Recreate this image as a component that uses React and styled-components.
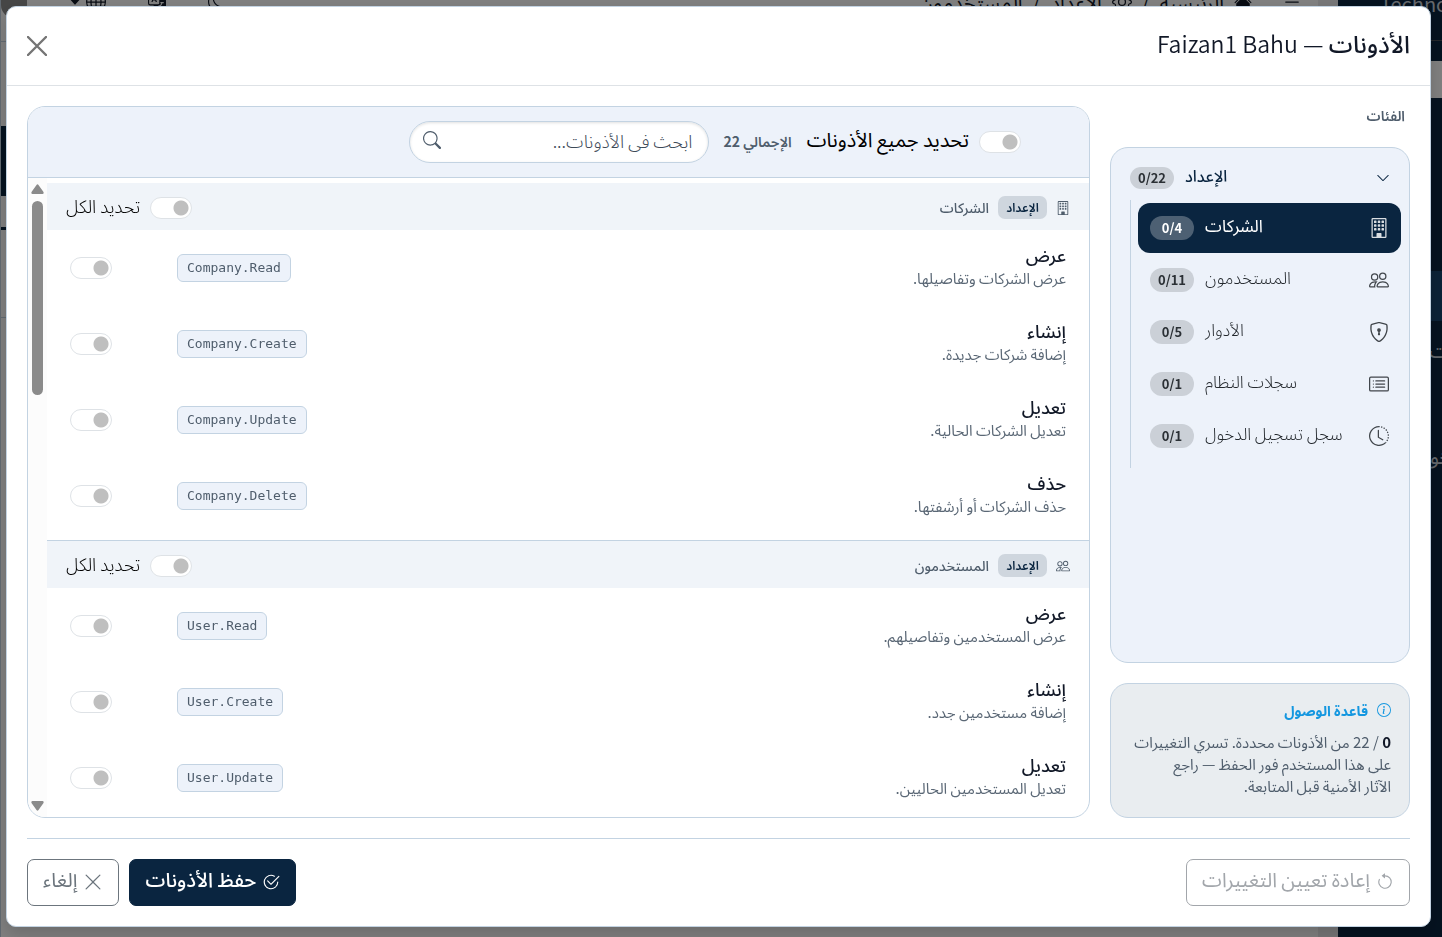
import React, { useState } from 'react';
import styled, { createGlobalStyle } from 'styled-components';
import {
  BsArrowCounterclockwise,
  BsBuilding,
  BsCardList,
  BsCaretDownFill,
  BsCheck2Circle,
  BsChevronDown,
  BsClockHistory,
  BsGear,
  BsGlobe,
  BsHouseFill,
  BsInfoCircle,
  BsList,
  BsMoon,
  BsPeople,
  BsSearch,
  BsShieldLock,
  BsTranslate,
  BsXLg,
} from 'react-icons/bs';

const GlobalStyle = createGlobalStyle`
  * {
    box-sizing: border-box;
  }
  body {
    margin: 0;
    background: #ffffff;
    font-family: "Noto Sans CJK SC", "Noto Sans Arabic", sans-serif;
    color: #111827;
  }
  button, input {
    font-family: inherit;
  }
  svg {
    display: block;
    flex-shrink: 0;
  }
`;

/* page under the dialog */

const StyledPage = styled.div`
  display: flex;
  height: 100vh;
  overflow: hidden;
`;

const StyledContent = styled.div`
  flex: 1;
  display: flex;
  flex-direction: column;
  border-left: 1px solid #c3d3e2;
`;

const StyledTopbar = styled.div`
  display: flex;
  justify-content: space-between;
  height: 42px;
  padding: 0 16px 0 0;
  border-bottom: 1px solid #c3d3e2;
  font-size: 20px;
  line-height: 6px;
`;

const StyledTopGroup = styled.div`
  display: flex;
  align-items: center;
  height: 4px;
  gap: ${(props) => props.$gap};
`;

const StyledAvatar = styled.span`
  width: 26px;
  height: 32px;
  border-radius: 0 0 13px 13px;
  background: #8d8d8d;
`;

const StyledBand = styled.div`
  height: ${(props) => props.$height};
  margin-top: ${(props) => props.$top};
  background: ${(props) => props.$color};
`;

const StyledGutter = styled.div`
  width: 20px;
  background: #ececee;
`;

const StyledNav = styled.nav`
  width: 104px;
  overflow: hidden;
  background: #0a2540;
  color: #c8d0d8;
  direction: ltr;
  white-space: nowrap;
`;

const StyledBrand = styled.div`
  height: 41px;
  padding-left: 42px;
  border-bottom: 1px solid #4a5058;
  font-size: 20px;
  line-height: 8px;
`;

const StyledNavBox = styled.div`
  height: 37px;
  margin-top: 20px;
  background: #ffffff;
`;

const StyledNavItem = styled.div`
  height: ${(props) => props.$height};
  margin-top: ${(props) => props.$top};
  padding-left: ${(props) => props.$left};
  background: ${(props) => (props.$active ? '#16456f' : 'transparent')};
  font-size: 20px;
  line-height: 50px;
`;

/* dialog */

const StyledBackdrop = styled.div`
  position: fixed;
  inset: 0;
  display: flex;
  padding: 6px 11px 10px 6px;
  background: rgba(0, 0, 0, 0.5);
`;

const StyledDialog = styled.section`
  flex: 1;
  min-width: 0;
  display: flex;
  flex-direction: column;
  background: #ffffff;
  border: 1px solid #c3d3e2;
  border-radius: 10px;
  box-shadow: 0 8px 16px rgba(0, 0, 0, 0.15);
`;

const StyledHeader = styled.header`
  display: flex;
  align-items: center;
  justify-content: space-between;
  height: 79px;
  padding: 0 20px;
  border-bottom: 1px solid #dee2e6;
`;

const StyledTitle = styled.h1`
  margin: 0;
  padding-bottom: 6px;
  font-size: 24px;
  font-weight: 500;
  line-height: 32px;
`;

const StyledName = styled.span`
  font-size: 23px;
  font-weight: 350;
`;

const StyledClose = styled.button`
  padding: 0;
  border: 0;
  background: none;
  color: #757575;
  cursor: pointer;
`;

const StyledBody = styled.div`
  flex: 1;
  min-height: 0;
  display: flex;
  gap: 20px;
  padding: 20px;
`;

const StyledSide = styled.aside`
  width: 300px;
  flex-shrink: 0;
  display: flex;
  flex-direction: column;
`;

const StyledSideTitle = styled.h2`
  margin: 0 5px;
  padding-bottom: 23px;
  font-size: 14px;
  font-weight: 600;
  line-height: 18px;
  color: #4f5d6c;
`;

const StyledTree = styled.div`
  flex: 1;
  padding: 16px 8px 0 19px;
  background: #edf2fa;
  border: 1px solid #c3d3e2;
  border-radius: 18px;
`;

const StyledTreeHead = styled.button`
  display: flex;
  align-items: center;
  justify-content: space-between;
  width: 100%;
  height: 28px;
  padding: 0 11px 0 0;
  border: 0;
  background: none;
  font-size: 16px;
  font-weight: 500;
  line-height: 24px;
  color: #0a2540;
  cursor: pointer;
`;

const StyledTail = styled.span`
  display: flex;
  align-items: center;
  gap: 11px;
`;

const StyledCount = styled.span`
  width: 44px;
  border-radius: 12px;
  background: ${(props) => (props.$active ? '#4d6073' : '#cbd0d7')};
  color: ${(props) => (props.$active ? '#ffffff' : '#2b3035')};
  font-size: 13px;
  font-weight: ${(props) => (props.$active ? 700 : 600)};
  line-height: ${(props) => (props.$small ? '22px' : '24px')};
  text-align: center;
  direction: ltr;
`;

const StyledBranch = styled.div`
  display: flex;
  flex-direction: column;
  gap: 2px;
  margin-top: 8px;
  padding: 3px 0 7px 7px;
  border-left: 1px solid #c3d3e2;
`;

const StyledBranchItem = styled.button`
  display: flex;
  align-items: center;
  justify-content: space-between;
  height: 50px;
  padding: 0 12px;
  border: 0;
  border-radius: 12px;
  background: ${(props) => (props.$active ? '#0a2540' : 'transparent')};
  color: ${(props) => (props.$active ? '#ffffff' : '#24292e')};
  font-size: 17px;
  font-weight: ${(props) => (props.$active ? 400 : 300)};
  line-height: 24px;
  cursor: pointer;
  svg {
    opacity: 0.85;
  }
`;

const StyledLabel = styled.span`
  padding-bottom: 6px;
`;

const StyledNote = styled.div`
  margin-top: 20px;
  padding: 15px 18px 20px;
  background: #e9edf0;
  border: 1px solid #c3d3e2;
  border-radius: 18px;
`;

const StyledNoteTitle = styled.div`
  display: flex;
  align-items: center;
  gap: 9px;
  font-size: 14px;
  font-weight: 700;
  line-height: 22px;
  color: #1497e0;
`;

const StyledNoteText = styled.p`
  margin: 10px 0 0;
  font-size: 15px;
  font-weight: 400;
  line-height: 22px;
  color: #4f5d6c;
  b {
    font-weight: 700;
    color: #111827;
  }
`;

const StyledPanel = styled.div`
  flex: 1;
  min-width: 0;
  display: flex;
  flex-direction: column;
  overflow: hidden;
  border: 1px solid #c3d3e2;
  border-radius: 18px;
`;

const StyledToolbar = styled.div`
  display: flex;
  align-items: center;
  gap: 15px;
  height: 71px;
  padding: 0 68px 0 16px;
  background: #edf2fa;
  border-bottom: 1px solid #c3d3e2;
`;

const StyledSwitchLabel = styled.label`
  display: flex;
  align-items: center;
  gap: 10px;
  font-size: ${(props) => (props.$large ? '20px' : '18px')};
  font-weight: ${(props) => (props.$large ? 400 : 300)};
  line-height: 28px;
  color: #000000;
`;

const StyledSwitch = styled.input`
  appearance: none;
  flex-shrink: 0;
  width: 42px;
  height: 22px;
  margin: 0;
  border: 1px solid #dee2e6;
  border-radius: 11px;
  background: #ffffff radial-gradient(circle at center, #bfbfbf 7px, transparent 8px) right 2px center / 16px 16px
    no-repeat;
  cursor: pointer;
  &:checked {
    background-position: left 2px center;
    border-color: #0a2540;
  }
`;

const StyledTotal = styled.span`
  padding-bottom: 2px;
  font-size: 14px;
  font-weight: 600;
  line-height: 20px;
  color: #4f5d6c;
`;

const StyledSearch = styled.label`
  display: flex;
  align-items: center;
  justify-content: space-between;
  width: 300px;
  height: 42px;
  padding: 0 15px 4px 13px;
  border: 1px solid #c3d3e2;
  border-radius: 21px;
  background: #ffffff;
  box-shadow: inset 0 1px 3px rgba(0, 0, 0, 0.12);
  color: #4f5d6c;
`;

const StyledSearchInput = styled.input`
  width: 200px;
  padding: 0;
  border: 0;
  outline: 0;
  background: none;
  font-size: 18px;
  font-weight: 300;
  line-height: 26px;
  direction: rtl;
  &::placeholder {
    color: #3d4a58;
    opacity: 1;
  }
`;

const StyledScroll = styled.div`
  flex: 1;
  min-height: 0;
  display: flex;
`;

const StyledList = styled.div`
  flex: 1;
  padding-top: 5px;
  overflow-y: auto;
  scrollbar-width: none;
`;

const StyledTrack = styled.div`
  display: flex;
  flex-direction: column;
  align-items: center;
  width: 19px;
  padding: 6px 0;
  background: #fcfcfc;
  color: #8b8b8b;
`;

const StyledThumb = styled.div`
  width: 11px;
  height: 31%;
  margin: 7px 0 auto;
  border-radius: 6px;
  background: #8b8b8b;
`;

const StyledGroup = styled.section`
  padding-bottom: 6px;
  & + & {
    border-top: 1px solid #c3d3e2;
  }
`;

const StyledGroupHead = styled.div`
  display: flex;
  align-items: center;
  gap: 9px;
  height: 47px;
  padding: 2px 19px 0;
  background: #f0f4f9;
  color: #4f5d6c;
`;

const StyledGroupBadge = styled.span`
  width: 49px;
  padding-bottom: 2px;
  border-radius: 7px;
  background: #cfd6de;
  color: #0a2540;
  font-size: 12px;
  font-weight: 600;
  line-height: 21px;
  text-align: center;
`;

const StyledGroupName = styled.h3`
  flex: 1;
  margin: 0;
  padding-bottom: 2px;
  font-size: 14px;
  font-weight: 500;
  line-height: 20px;
`;

const StyledRow = styled.div`
  display: flex;
  align-items: center;
  height: 76px;
  padding: 0 23px;
`;

const StyledRowText = styled.div`
  flex: 1;
  padding-bottom: 7px;
`;

const StyledRowTitle = styled.div`
  font-size: 18px;
  font-weight: 500;
  line-height: 26px;
`;

const StyledRowHint = styled.div`
  font-size: 15px;
  font-weight: 400;
  line-height: 22px;
  color: #5b6876;
`;

const StyledCode = styled.code`
  margin-left: 65px;
  padding: 0 9px;
  border: 1px solid #c3d3e2;
  border-radius: 6px;
  background: #edf2fa;
  font-family: 'DejaVu Sans Mono', monospace;
  font-size: 13px;
  line-height: 26px;
  color: #4f5d6c;
  direction: ltr;
`;

const StyledFooter = styled.footer`
  display: flex;
  align-items: center;
  gap: 10px;
  margin: 0 20px;
  padding: 20px 0;
  border-top: 1px solid #c3d3e2;
`;

const buttonColors = {
  primary: { text: '#ffffff', border: '#0a2540', back: '#0a2540' },
  outline: { text: '#6c757d', border: '#6c757d', back: '#ffffff' },
  muted: { text: '#a2a6ab', border: '#a2a6ab', back: '#ffffff' },
};

const StyledButton = styled.button`
  display: flex;
  align-items: center;
  gap: 6px;
  height: 47px;
  padding: 0 15px 2px;
  border: 1px solid ${(props) => buttonColors[props.$kind].border};
  border-radius: 7px;
  background: ${(props) => buttonColors[props.$kind].back};
  color: ${(props) => buttonColors[props.$kind].text};
  font-size: 20px;
  font-weight: ${(props) => (props.$kind === 'primary' ? 500 : 400)};
  line-height: 30px;
  cursor: pointer;
`;

const StyledSpacer = styled.div`
  flex: 1;
`;

const categories = [
  { id: 'companies', label: 'الشركات', count: '0/4', icon: BsBuilding },
  { id: 'users', label: 'المستخدمون', count: '0/11', icon: BsPeople },
  { id: 'roles', label: 'الأدوار', count: '0/5', icon: BsShieldLock },
  { id: 'logs', label: 'سجلات النظام', count: '0/1', icon: BsCardList },
  { id: 'logins', label: 'سجل تسجيل الدخول', count: '0/1', icon: BsClockHistory },
];

const groups = [
  {
    id: 'companies',
    label: 'الشركات',
    icon: BsBuilding,
    items: [
      { code: 'Company.Read', title: 'عرض', hint: 'عرض الشركات وتفاصيلها.' },
      { code: 'Company.Create', title: 'إنشاء', hint: 'إضافة شركات جديدة.' },
      { code: 'Company.Update', title: 'تعديل', hint: 'تعديل الشركات الحالية.' },
      { code: 'Company.Delete', title: 'حذف', hint: 'حذف الشركات أو أرشفتها.' },
    ],
  },
  {
    id: 'users',
    label: 'المستخدمون',
    icon: BsPeople,
    items: [
      { code: 'User.Read', title: 'عرض', hint: 'عرض المستخدمين وتفاصيلهم.' },
      { code: 'User.Create', title: 'إنشاء', hint: 'إضافة مستخدمين جدد.' },
      { code: 'User.Update', title: 'تعديل', hint: 'تعديل المستخدمين الحاليين.' },
    ],
  },
];

const Page = () => (
  <StyledPage dir="rtl" aria-hidden="true">
    <StyledNav>
      <StyledBrand>Techno</StyledBrand>
      <StyledNavBox />
      <StyledNavItem $height="50px" $top="173px" $active />
      <StyledNavItem $height="50px" $top="4px" $left="91px">
        ت
      </StyledNavItem>
      <StyledNavItem $height="50px" $top="56px" $left="78px">
        الدخول
      </StyledNavItem>
    </StyledNav>
    <StyledGutter />
    <StyledContent>
      <StyledTopbar>
        <StyledTopGroup $gap="30px">
          <BsList size={20} />
          <StyledTopGroup $gap="10px">
            <BsHouseFill size={18} />
            <span>الرئيسية</span>
            <span>/</span>
            <BsGear size={20} />
            <span>الإعداد</span>
            <span>/</span>
            <span>المستخدمون</span>
          </StyledTopGroup>
        </StyledTopGroup>
        <StyledTopGroup $gap="42px">
          <BsMoon size={18} />
          <BsTranslate size={18} />
          <StyledTopGroup $gap="5px">
            <BsGlobe size={20} />
            <BsCaretDownFill size={12} />
          </StyledTopGroup>
          <StyledAvatar />
        </StyledTopGroup>
      </StyledTopbar>
      <StyledBand $top="84px" $height="70px" $color="#0a2540" />
      <StyledBand $top="31px" $height="3px" $color="#0a2540" />
      <StyledBand $top="87px" $height="1px" $color="#c3d3e2" />
    </StyledContent>
  </StyledPage>
);

const Switch = ({ label, large }) => {
  const [on, setOn] = useState(false);

  return (
    <StyledSwitchLabel $large={large}>
      <StyledSwitch type="checkbox" role="switch" checked={on} onChange={() => setOn(!on)} />
      <StyledLabel>{label}</StyledLabel>
    </StyledSwitchLabel>
  );
};

const Permission = ({ item }) => (
  <StyledRow>
    <StyledRowText>
      <StyledRowTitle>{item.title}</StyledRowTitle>
      <StyledRowHint>{item.hint}</StyledRowHint>
    </StyledRowText>
    <StyledCode>{item.code}</StyledCode>
    <StyledSwitch type="checkbox" role="switch" aria-label={item.code} />
  </StyledRow>
);

const App = () => {
  const [active, setActive] = useState('companies');

  return (
    <>
      <GlobalStyle />
      <Page />
      <StyledBackdrop dir="rtl" lang="ar">
        <StyledDialog role="dialog" aria-modal="true" aria-labelledby="dialog-title">
          <StyledHeader>
            <StyledTitle id="dialog-title">
              الأذونات <StyledName>— Faizan1 Bahu</StyledName>
            </StyledTitle>
            <StyledClose type="button" aria-label="إغلاق">
              <svg width="20" height="20" viewBox="0 0 20 20" fill="none" stroke="currentColor" strokeWidth="2.4">
                <path d="M1 1l18 18M19 1L1 19" strokeLinecap="round" />
              </svg>
            </StyledClose>
          </StyledHeader>

          <StyledBody>
            <StyledSide>
              <StyledSideTitle>الفئات</StyledSideTitle>
              <StyledTree>
                <StyledTreeHead type="button">
                  <BsChevronDown size={14} />
                  <StyledTail>
                    <StyledLabel>الإعداد</StyledLabel>
                    <StyledCount $small>0/22</StyledCount>
                  </StyledTail>
                </StyledTreeHead>
                <StyledBranch>
                  {categories.map(({ id, label, count, icon: Icon }) => (
                    <StyledBranchItem key={id} type="button" $active={id === active} onClick={() => setActive(id)}>
                      <Icon size={20} />
                      <StyledTail>
                        <StyledLabel>{label}</StyledLabel>
                        <StyledCount $active={id === active}>{count}</StyledCount>
                      </StyledTail>
                    </StyledBranchItem>
                  ))}
                </StyledBranch>
              </StyledTree>
              <StyledNote>
                <StyledNoteTitle>
                  <BsInfoCircle size={14} />
                  قاعدة الوصول
                </StyledNoteTitle>
                <StyledNoteText>
                  <b>0</b> / 22 من الأذونات محددة. تسري التغييرات على هذا المستخدم فور الحفظ — راجع
                  {' '}الآثار&nbsp;الأمنية قبل المتابعة.
                </StyledNoteText>
              </StyledNote>
            </StyledSide>

            <StyledPanel>
              <StyledToolbar>
                <Switch label="تحديد جميع الأذونات" large />
                <StyledTotal>الإجمالي 22</StyledTotal>
                <StyledSearch>
                  <StyledSearchInput type="text" placeholder="ابحث في الأذونات..." aria-label="ابحث في الأذونات" />
                  <BsSearch size={18} />
                </StyledSearch>
              </StyledToolbar>
              <StyledScroll>
                <StyledList>
                  {groups.map(({ id, label, icon: Icon, items }) => (
                    <StyledGroup key={id}>
                      <StyledGroupHead>
                        <Icon size={14} />
                        <StyledGroupBadge>الإعداد</StyledGroupBadge>
                        <StyledGroupName>{label}</StyledGroupName>
                        <Switch label="تحديد الكل" />
                      </StyledGroupHead>
                      {items.map((item) => (
                        <Permission key={item.code} item={item} />
                      ))}
                    </StyledGroup>
                  ))}
                </StyledList>
                <StyledTrack aria-hidden="true">
                  <svg width="13" height="10" viewBox="0 0 13 10" fill="currentColor">
                    <path d="M5.5 1Q6.5 -.5 7.5 1L12.5 8Q13 10 11.5 10H1.5Q0 10 .5 8Z" />
                  </svg>
                  <StyledThumb />
                  <svg width="13" height="10" viewBox="0 0 13 10" fill="currentColor">
                    <path d="M5.5 9Q6.5 10.5 7.5 9L12.5 2Q13 0 11.5 0H1.5Q0 0 .5 2Z" />
                  </svg>
                </StyledTrack>
              </StyledScroll>
            </StyledPanel>
          </StyledBody>

          <StyledFooter>
            <StyledButton type="button" $kind="muted">
              <BsArrowCounterclockwise size={18} />
              <StyledLabel>إعادة تعيين التغييرات</StyledLabel>
            </StyledButton>
            <StyledSpacer />
            <StyledButton type="button" $kind="primary">
              <BsCheck2Circle size={18} />
              <StyledLabel>حفظ الأذونات</StyledLabel>
            </StyledButton>
            <StyledButton type="button" $kind="outline">
              <BsXLg size={20} />
              <StyledLabel>إلغاء</StyledLabel>
            </StyledButton>
          </StyledFooter>
        </StyledDialog>
      </StyledBackdrop>
    </>
  );
};

export default App;
